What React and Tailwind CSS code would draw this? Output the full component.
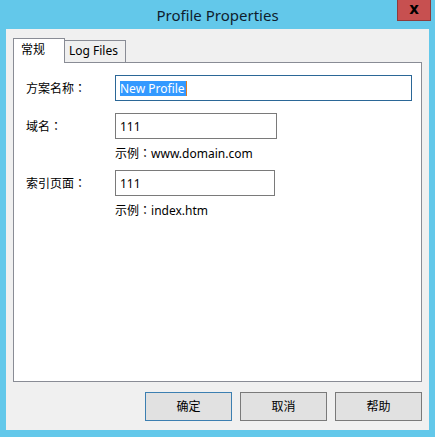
import React from "react";

const font = { fontFamily: '"Noto Sans", "Noto Sans CJK SC", sans-serif' };
const tc = { fontFamily: '"Noto Sans CJK TC", sans-serif' };

const Colon = () => <span style={tc}>：</span>;

function Field({ label, value, width, selected, focus }) {
  return (
    <div className="flex items-center h-[26px]">
      <div className="w-[89px] text-[12px] leading-[16px] text-black">
        {label}
        <Colon />
      </div>
      <div
        className={`h-[26px] ${width} border ${focus ? "border-[#2b6797]" : "border-[#7a7a7a]"} bg-white flex items-center pl-[4px]`}
      >
        {selected ? (
          <span className="bg-[#3399ff] text-white text-[12px] leading-[15px] pr-[1px] border-r border-[#e07b20]">{value}</span>
        ) : (
          <span className="text-[12px] leading-[15px] text-black">{value}</span>
        )}
      </div>
    </div>
  );
}

function Hint({ children }) {
  return (
    <div className="pl-[89px] text-[12px] leading-[16px] text-black">
      示例<Colon />
      {children}
    </div>
  );
}

function Button({ children, def }) {
  return (
    <div
      className={`w-[87px] h-[29px] flex items-center justify-center bg-[#e1e1e1] border ${def ? "border-[#3c7fb1]" : "border-[#7a7a7a]"} text-[12px] text-black`}
    >
      {children}
    </div>
  );
}

export default function App() {
  return (
    <div className="w-[435px] h-[437px] bg-[#63c8ea] flex flex-col" style={font}>
      <div className="h-[29px] relative flex items-center justify-center">
        <span className="text-[15px] leading-[20px] text-[#0f1d2e] mt-[1px]">Profile Properties</span>
        <div className="absolute top-0 right-[4px] w-[34px] h-[21px] bg-[#c75050] border border-[#8e3b3b] border-t-0 flex items-center justify-center">
          <span className="text-[15px] font-bold leading-none text-black -mt-[2px]" style={{ fontFamily: '"DejaVu Sans", sans-serif' }}>x</span>
        </div>
      </div>
      <div className="flex-1 mx-[6px] mb-[7px] bg-[#f0f0f0] flex flex-col px-[7px] pt-[9px] pb-[9px]">
        <div className="flex items-end h-[24px]">
          <div className="relative z-10 -mb-px h-[25px] w-[52px] bg-white border border-b-0 border-[#898c95] pl-[7px] pt-[3px] text-[12px] leading-[16px] text-black">
            常规
          </div>
          <div className="h-[22px] w-[61px] bg-[#f0f0f0] border border-l-0 border-b-0 border-[#898c95] pl-[4px] pt-[2px] text-[12px] leading-[16px] text-black">
            Log Files
          </div>
        </div>
        <div className="flex-1 bg-white border border-[#898c95] pl-[12px] pt-[12px] flex flex-col">
          <Field label="方案名称" value="New Profile" width="w-[297px]" selected focus />
          <div className="h-[12px]" />
          <Field label="域名" value="111" width="w-[162px]" />
          <div className="h-[6px]" />
          <Hint>www.domain.com</Hint>
          <div className="h-[8px]" />
          <Field label="索引页面" value="111" width="w-[160px]" />
          <div className="h-[6px]" />
          <Hint>index.htm</Hint>
        </div>
        <div className="flex justify-end gap-[8px] mt-[10px]">
          <Button def>确定</Button>
          <Button>取消</Button>
          <Button>帮助</Button>
        </div>
      </div>
    </div>
  );
}
